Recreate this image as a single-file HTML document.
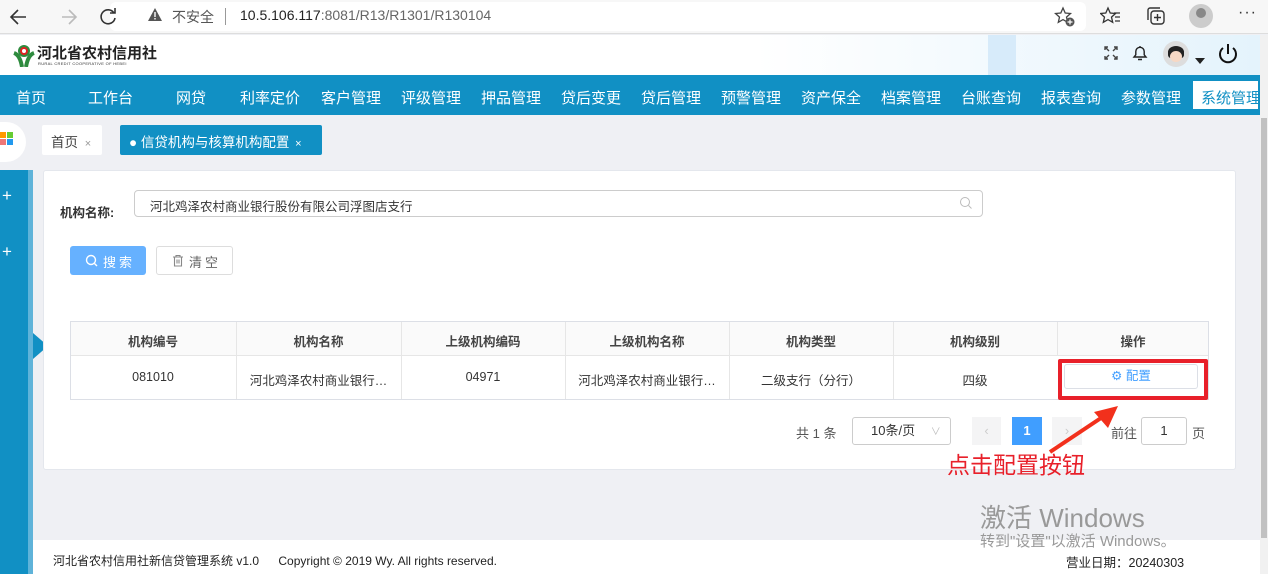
<!DOCTYPE html>
<html><head><meta charset="utf-8"><style>
*{margin:0;padding:0;box-sizing:border-box}
body{width:1268px;height:574px;overflow:hidden;position:relative;background:#eff0f4;font-family:"Liberation Sans","Noto Sans CJK SC",sans-serif;font-size:13px;color:#333}
.a{position:absolute;white-space:nowrap}
.nav span{position:absolute;top:12px;color:#fff;font-size:15px;white-space:nowrap}
.th,.td{position:absolute;text-align:center;font-size:12.5px;white-space:nowrap}
.th{font-weight:bold;color:#444;top:331px}
.td{top:370px;color:#333}
</style></head><body>
<!-- browser bar -->
<div class="a" style="left:0;top:0;width:1268px;height:34px;background:#f7f7f7;border-bottom:1px solid #ddd"></div>
<div class="a" style="left:110px;top:2px;width:976px;height:29px;background:#fff;border-radius:6px"></div>
<svg class="a" style="left:8px;top:6px" width="90" height="22" viewBox="0 0 90 22" fill="none" stroke-width="1.6">
<path d="M18 11H4M10 4L3 11l7 7" stroke="#333"/>
<path d="M68 11H54M61 4l7 7-7 7" stroke="#bbb"/>
</svg>
<svg class="a" style="left:97px;top:5px" width="22" height="22"><path d="M17 8a7 7 0 1 0 1 5M18 3v5h-5" stroke="#333" stroke-width="1.6" fill="none"/></svg>
<svg class="a" style="left:147px;top:7px" width="16" height="16"><path d="M8 1L15 14H1z" fill="#555"/><rect x="7.3" y="5" width="1.4" height="5" fill="#fff"/><rect x="7.3" y="11" width="1.4" height="1.5" fill="#fff"/></svg>
<div class="a" style="left:172px;top:7px;font-size:14px;color:#555">不安全</div>
<div class="a" style="left:225px;top:8px;width:1px;height:17px;background:#999"></div>
<div class="a" style="left:240px;top:7px;font-size:14px;color:#222">10.5.106.117<span style="color:#666">:8081/R13/R1301/R130104</span></div>
<svg class="a" style="left:1054px;top:6px" width="22" height="22"><path d="M9 2l2.2 5 5.3.5-4 3.6 1.2 5.2L9 13.6 4.3 16.3l1.2-5.2-4-3.6 5.3-.5z" stroke="#444" stroke-width="1.3" fill="none"/><circle cx="16" cy="16" r="4.5" fill="#555"/><path d="M16 13.5v5M13.5 16h5" stroke="#fff" stroke-width="1.2"/></svg>
<svg class="a" style="left:1100px;top:6px" width="22" height="22"><path d="M8 2l2.2 5 5.3.5-4 3.6 1.2 5.2L8 13.6 3.3 16.3l1.2-5.2-4-3.6 5.3-.5z" stroke="#333" stroke-width="1.3" fill="none"/><path d="M14 7h6M15 11h5M15 15h5" stroke="#333" stroke-width="1.3"/></svg>
<svg class="a" style="left:1145px;top:5px" width="22" height="22"><rect x="6" y="6" width="13" height="13" rx="3" stroke="#333" stroke-width="1.4" fill="none"/><path d="M3 15V5a2 2 0 0 1 2-2h10" stroke="#333" stroke-width="1.4" fill="none"/><path d="M12.5 9v7M9 12.5h7" stroke="#333" stroke-width="1.4"/></svg>
<div class="a" style="left:1189px;top:4px;width:24px;height:24px;border-radius:50%;background:#ccc"></div>
<div class="a" style="left:1196px;top:8px;width:10px;height:10px;border-radius:50%;background:#888"></div>
<div class="a" style="left:1238px;top:4px;font-size:16px;color:#333;letter-spacing:1px">···</div>
<!-- header -->
<div class="a" style="left:0;top:35px;width:1260px;height:40px;background:linear-gradient(90deg,#fff 60%,#e4f3fc)"></div>
<div class="a" style="left:988px;top:35px;width:28px;height:40px;background:#d7ebfa"></div>
<svg class="a" style="left:12px;top:43px" width="24" height="24"><circle cx="12" cy="8" r="6" fill="#2e8b3e"/><circle cx="12" cy="8" r="3" fill="#fff" stroke="#d22" stroke-width="2"/><path d="M2 10q6 2 8 14M22 10q-6 2-8 14" stroke="#2e8b3e" stroke-width="4" fill="none"/></svg>
<div class="a" style="left:37px;top:42px;font-size:15px;font-weight:bold;color:#222">河北省农村信用社</div>
<div class="a" style="left:38px;top:61px;font-size:4px;color:#333;letter-spacing:.3px">RURAL CREDIT COOPERATIVE OF HEBEI</div>
<svg class="a" style="left:1103px;top:45px" width="16" height="16" stroke="#444" stroke-width="1.4" fill="none"><path d="M2 5V2h3M11 2h3v3M14 11v3h-3M5 14H2v-3M2 2l4 4M14 2l-4 4M14 14l-4-4M2 14l4-4"/></svg>
<svg class="a" style="left:1131px;top:44px" width="18" height="18"><path d="M3 13h12l-1.8-2.2V7.5a4.2 4.2 0 0 0-8.4 0v3.3zM7 15.5h4M9 2v1.3" stroke="#222" stroke-width="1.4" fill="none"/></svg>
<div class="a" style="left:1163px;top:41px;width:26px;height:26px;border-radius:50%;background:#ddd"></div>
<div class="a" style="left:1168px;top:46px;width:16px;height:12px;border-radius:50% 50% 3px 3px;background:#222"></div>
<div class="a" style="left:1170px;top:51px;width:12px;height:11px;border-radius:50%;background:#f7d8c4"></div>
<div class="a" style="left:1195px;top:58px;border:5px solid transparent;border-top:6px solid #222"></div>
<svg class="a" style="left:1216px;top:42px" width="24" height="24"><path d="M7 6a8 8 0 1 0 10 0M12 2v10" stroke="#111" stroke-width="2" fill="none"/></svg>
<!-- nav -->
<div class="a nav" style="left:0;top:75px;width:1260px;height:40px;background:#1190c4;overflow:hidden">
<span style="left:16px">首页</span><span style="left:88px">工作台</span><span style="left:176px">网贷</span><span style="left:240px">利率定价</span><span style="left:321px">客户管理</span><span style="left:401px">评级管理</span><span style="left:481px">押品管理</span><span style="left:561px">贷后变更</span><span style="left:641px">贷后管理</span><span style="left:721px">预警管理</span><span style="left:801px">资产保全</span><span style="left:881px">档案管理</span><span style="left:961px">台账查询</span><span style="left:1041px">报表查询</span><span style="left:1121px">参数管理</span>
<div class="a" style="left:1193px;top:6px;width:65px;height:28px;background:#fff"></div><span style="left:1201px;color:#1190c4">系统管理</span>
</div>
<!-- scrollbar -->
<div class="a" style="left:1260px;top:35px;width:8px;height:539px;background:#f1f1f1"></div>
<div class="a" style="left:1261px;top:118px;width:6px;height:420px;background:#c1c1c1"></div>
<!-- tabs -->
<div class="a" style="left:0;top:122px;width:26px;height:40px;background:#fff;border-radius:0 20px 20px 0"></div>
<div class="a" style="left:0;top:132px;width:6px;height:6px;background:#f90"></div><div class="a" style="left:7px;top:132px;width:6px;height:6px;background:#6c3"></div>
<div class="a" style="left:0;top:139px;width:6px;height:6px;background:#e77"></div><div class="a" style="left:7px;top:139px;width:6px;height:6px;background:#29e"></div>
<div class="a" style="left:42px;top:125px;width:60px;height:30px;background:#fff;border-radius:2px"></div>
<div class="a" style="left:51px;top:131px;font-size:13.5px;color:#444">首页 <span style="font-size:11px;color:#999;margin-left:3px">×</span></div>
<div class="a" style="left:120px;top:125px;width:202px;height:30px;background:#1190c4;border-radius:2px"></div>
<div class="a" style="left:129px;top:131px;font-size:13.5px;color:#fff">● 信贷机构与核算机构配置 <span style="font-size:11px;margin-left:2px">×</span></div>
<!-- sidebar -->
<div class="a" style="left:0;top:170px;width:28px;height:404px;background:#1190c4"></div>
<div class="a" style="left:28px;top:170px;width:5px;height:404px;background:#5fb3d9"></div>
<div class="a" style="left:2px;top:186px;color:#fff;font-size:17px">+</div>
<div class="a" style="left:2px;top:242px;color:#fff;font-size:17px">+</div>
<div class="a" style="left:33px;top:333px;border-top:13px solid transparent;border-bottom:13px solid transparent;border-left:15px solid #1190c4"></div>
<!-- card -->
<div class="a" style="left:43px;top:170px;width:1193px;height:300px;background:#fff;border:1px solid #e4e7ed;border-radius:3px"></div>
<div class="a" style="left:60px;top:202px;font-size:12.5px;font-weight:bold;color:#333">机构名称:</div>
<div class="a" style="left:134px;top:190px;width:849px;height:27px;border:1px solid #ccc;border-radius:4px"></div>
<div class="a" style="left:150px;top:196px;font-size:12.5px;color:#333">河北鸡泽农村商业银行股份有限公司浮图店支行</div>
<svg class="a" style="left:959px;top:196px" width="14" height="14"><circle cx="6" cy="6" r="4.5" stroke="#bbb" fill="none"/><path d="M9.5 9.5l3 3" stroke="#bbb"/></svg>
<div class="a" style="left:70px;top:246px;width:76px;height:29px;background:#66b1ff;border-radius:3px"></div>
<svg class="a" style="left:85px;top:254px" width="14" height="14"><circle cx="6" cy="6" r="4.5" stroke="#fff" stroke-width="1.4" fill="none"/><path d="M9.5 9.5l2.5 2.5" stroke="#fff" stroke-width="1.4"/></svg>
<div class="a" style="left:103px;top:252px;color:#fff;font-size:13px;letter-spacing:3px">搜索</div>
<div class="a" style="left:156px;top:246px;width:77px;height:29px;border:1px solid #ddd;border-radius:3px"></div>
<svg class="a" style="left:172px;top:254px" width="12" height="13"><path d="M1 3h10M4 3V1.5h4V3M2.5 3v9h7V3M5 5.5v4M7 5.5v4" stroke="#888" stroke-width="1.1" fill="none"/></svg>
<div class="a" style="left:189px;top:252px;color:#666;font-size:13px;letter-spacing:3px">清空</div>
<!-- table -->
<div class="a" style="left:70px;top:321px;width:1139px;height:79px;border:1px solid #dcdfe6"></div>
<div class="a" style="left:71px;top:322px;width:1137px;height:34px;background:#fafafa;border-bottom:1px solid #e6e6e6"></div>
<div class="a" style="left:236px;top:322px;width:1px;height:77px;background:#e6e6e6"></div>
<div class="a" style="left:401px;top:322px;width:1px;height:77px;background:#e6e6e6"></div>
<div class="a" style="left:565px;top:322px;width:1px;height:77px;background:#e6e6e6"></div>
<div class="a" style="left:729px;top:322px;width:1px;height:77px;background:#e6e6e6"></div>
<div class="a" style="left:893px;top:322px;width:1px;height:77px;background:#e6e6e6"></div>
<div class="a" style="left:1057px;top:322px;width:1px;height:34px;background:#e6e6e6"></div>
<div class="th" style="left:70px;width:166px">机构编号</div><div class="th" style="left:236px;width:165px">机构名称</div><div class="th" style="left:401px;width:164px">上级机构编码</div><div class="th" style="left:565px;width:164px">上级机构名称</div><div class="th" style="left:729px;width:164px">机构类型</div><div class="th" style="left:893px;width:164px">机构级别</div><div class="th" style="left:1057px;width:152px">操作</div>
<div class="td" style="left:70px;width:166px">081010</div><div class="td" style="left:236px;width:165px">河北鸡泽农村商业银行…</div><div class="td" style="left:401px;width:164px">04971</div><div class="td" style="left:565px;width:164px">河北鸡泽农村商业银行…</div><div class="td" style="left:729px;width:164px">二级支行（分行）</div><div class="td" style="left:893px;width:164px">四级</div>
<div class="a" style="left:1064px;top:364px;width:134px;height:25px;border:1px solid #dcdfe6;border-radius:3px;background:#fff;color:#409eff;text-align:center;line-height:23px;font-size:12.5px">⚙ 配置</div>
<div class="a" style="left:1058px;top:359px;width:150px;height:41px;border:4px solid #e8202a;border-radius:2px"></div>
<!-- pagination -->
<div class="a" style="left:796px;top:423px;color:#555;font-size:13px">共 1 条</div>
<div class="a" style="left:852px;top:417px;width:99px;height:28px;border:1px solid #ccc;border-radius:3px;font-size:13px;line-height:26px;padding-left:18px">10条/页 <span style="color:#bbb;margin-left:12px;font-size:10px">∨</span></div>
<div class="a" style="left:972px;top:417px;width:29px;height:28px;background:#f4f4f5;color:#ccc;text-align:center;line-height:28px">‹</div>
<div class="a" style="left:1012px;top:417px;width:30px;height:28px;background:#409eff;color:#fff;text-align:center;line-height:28px;font-weight:bold">1</div>
<div class="a" style="left:1052px;top:417px;width:30px;height:28px;background:#f4f4f5;color:#ccc;text-align:center;line-height:28px">›</div>
<div class="a" style="left:1111px;top:423px;color:#555">前往</div>
<div class="a" style="left:1141px;top:417px;width:46px;height:28px;border:1px solid #ccc;border-radius:3px;text-align:center;line-height:26px">1</div>
<div class="a" style="left:1192px;top:423px;color:#555">页</div>
<svg class="a" style="left:1030px;top:400px" width="100" height="60"><path d="M20 52L80 12" stroke="#f2301c" stroke-width="4"/><path d="M88 6L64 12L78 28z" fill="#f2301c"/></svg>
<div class="a" style="left:947px;top:446px;font-size:23px;color:#e8202a">点击配置按钮</div>
<!-- footer -->
<div class="a" style="left:33px;top:540px;width:1227px;height:34px;background:#fff"></div>
<div class="a" style="left:53px;top:552px;font-size:12px;color:#222">河北省农村信用社新信贷管理系统 v1.0 <span style="margin-left:16px">Copyright © 2019 Wy. All rights reserved.</span></div>
<div class="a" style="left:1066px;top:552px;font-size:12.5px;color:#222">营业日期：20240303</div>
<div class="a" style="left:980px;top:498px;font-size:26px;color:#999">激活 Windows</div>
<div class="a" style="left:980px;top:530px;font-size:15px;color:#999">转到"设置"以激活 Windows。</div>
</body></html>
